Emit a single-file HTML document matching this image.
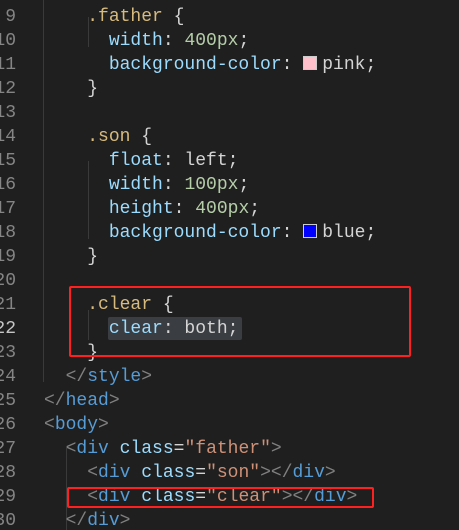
<!DOCTYPE html>
<html><head><meta charset="utf-8"><style>
html,body{margin:0;padding:0;background:#1f1f1f;width:459px;height:530px;overflow:hidden}
.ed{position:relative;font-family:"Liberation Mono",monospace;font-size:18px;width:459px;height:530px;overflow:hidden}
.l{position:absolute;left:0;width:459px;height:24px;line-height:24px;white-space:pre;}
.n{position:absolute;left:-24px;width:40px;text-align:right;color:#858585}
.c{position:absolute;left:44px;color:#d4d4d4}
.s{color:#d7ba7d}.p{color:#9cdcfe}.v{color:#b5cea8}.t{color:#569cd6}.g{color:#808080}.st{color:#ce9178}
.sw{display:inline-block;width:12px;height:12px;border:1px solid #ccc;vertical-align:-1px;margin:0 5px 0 0}
.box{position:absolute;border:2px solid #ff2020;border-radius:2px}
.guide{position:absolute;width:1px;background:#3a3a3a}
</style></head><body><div class="ed">
<div class="guide" style="left:43px;top:0;height:382px"></div>
<div class="guide" style="left:88px;top:17px;height:30px"></div>
<div class="guide" style="left:88px;top:161px;height:78px"></div>
<div class="guide" style="left:88px;top:310px;height:30px"></div>
<div class="guide" style="left:66px;top:448px;height:82px"></div>
<div style="position:absolute;left:108px;top:317px;width:134px;height:23px;background:#3a3d41;border-radius:2px"></div>
<div class="l" style="top:5px"><span class="n">9</span><span class="c">    <span class="s">.father</span> {</span></div>
<div class="l" style="top:29px"><span class="n">10</span><span class="c">      <span class="p">width</span>: <span class="v">400px</span>;</span></div>
<div class="l" style="top:53px"><span class="n">11</span><span class="c">      <span class="p">background-color</span>: <span class="sw" style="background:#ffc0cb"></span>pink;</span></div>
<div class="l" style="top:77px"><span class="n">12</span><span class="c">    }</span></div>
<div class="l" style="top:101px"><span class="n">13</span></div>
<div class="l" style="top:125px"><span class="n">14</span><span class="c">    <span class="s">.son</span> {</span></div>
<div class="l" style="top:149px"><span class="n">15</span><span class="c">      <span class="p">float</span>: left;</span></div>
<div class="l" style="top:173px"><span class="n">16</span><span class="c">      <span class="p">width</span>: <span class="v">100px</span>;</span></div>
<div class="l" style="top:197px"><span class="n">17</span><span class="c">      <span class="p">height</span>: <span class="v">400px</span>;</span></div>
<div class="l" style="top:221px"><span class="n">18</span><span class="c">      <span class="p">background-color</span>: <span class="sw" style="background:#0000ff"></span>blue;</span></div>
<div class="l" style="top:245px"><span class="n">19</span><span class="c">    }</span></div>
<div class="l" style="top:269px"><span class="n">20</span></div>
<div class="l" style="top:293px"><span class="n">21</span><span class="c">    <span class="s">.clear</span> {</span></div>
<div class="l" style="top:317px"><span class="n" style="color:#c6c6c6">22</span><span class="c">      <span class="p">clear</span>: both;</span></div>
<div class="l" style="top:341px"><span class="n">23</span><span class="c">    }</span></div>
<div class="l" style="top:365px"><span class="n">24</span><span class="c">  <span class="g">&lt;/</span><span class="t">style</span><span class="g">&gt;</span></span></div>
<div class="l" style="top:389px"><span class="n">25</span><span class="c"><span class="g">&lt;/</span><span class="t">head</span><span class="g">&gt;</span></span></div>
<div class="l" style="top:413px"><span class="n">26</span><span class="c"><span class="g">&lt;</span><span class="t">body</span><span class="g">&gt;</span></span></div>
<div class="l" style="top:437px"><span class="n">27</span><span class="c">  <span class="g">&lt;</span><span class="t">div</span> <span class="p">class</span>=<span class="st">"father"</span><span class="g">&gt;</span></span></div>
<div class="l" style="top:461px"><span class="n">28</span><span class="c">    <span class="g">&lt;</span><span class="t">div</span> <span class="p">class</span>=<span class="st">"son"</span><span class="g">&gt;&lt;/</span><span class="t">div</span><span class="g">&gt;</span></span></div>
<div class="l" style="top:485px"><span class="n">29</span><span class="c">    <span class="g">&lt;</span><span class="t">div</span> <span class="p">class</span>=<span class="st">"clear"</span><span class="g">&gt;&lt;/</span><span class="t">div</span><span class="g">&gt;</span></span></div>
<div class="l" style="top:509px"><span class="n">30</span><span class="c">  <span class="g">&lt;/</span><span class="t">div</span><span class="g">&gt;</span></span></div>
<div class="box" style="left:69px;top:286px;width:338px;height:67px"></div>
<div class="box" style="left:67px;top:487px;width:303px;height:17px"></div>
</div></body></html>
